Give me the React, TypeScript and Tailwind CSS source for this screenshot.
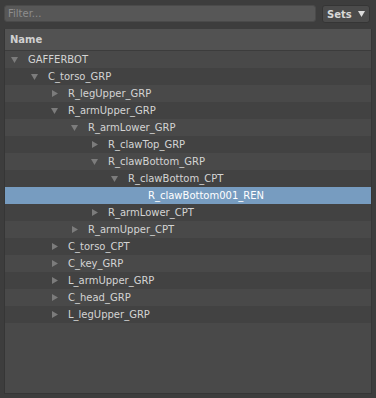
import React from "react";

type Node = { name: string; level: number; state: "open" | "closed" | "leaf" };

const rows: Node[] = [
  { name: "GAFFERBOT", level: 0, state: "open" },
  { name: "C_torso_GRP", level: 1, state: "open" },
  { name: "R_legUpper_GRP", level: 2, state: "closed" },
  { name: "R_armUpper_GRP", level: 2, state: "open" },
  { name: "R_armLower_GRP", level: 3, state: "open" },
  { name: "R_clawTop_GRP", level: 4, state: "closed" },
  { name: "R_clawBottom_GRP", level: 4, state: "open" },
  { name: "R_clawBottom_CPT", level: 5, state: "open" },
  { name: "R_clawBottom001_REN", level: 6, state: "leaf" },
  { name: "R_armLower_CPT", level: 4, state: "closed" },
  { name: "R_armUpper_CPT", level: 3, state: "closed" },
  { name: "C_torso_CPT", level: 2, state: "closed" },
  { name: "C_key_GRP", level: 2, state: "closed" },
  { name: "L_armUpper_GRP", level: 2, state: "closed" },
  { name: "C_head_GRP", level: 2, state: "closed" },
  { name: "L_legUpper_GRP", level: 2, state: "closed" },
];

const font = { fontFamily: '"DejaVu Sans", sans-serif' };

function Arrow({ state }: { state: Node["state"] }) {
  if (state === "leaf") return <span className="w-[7px] mr-[10px] shrink-0" />;
  return (
    <span className="w-[7px] mr-[10px] shrink-0 flex items-center justify-center">
      {state === "open" ? (
        <svg width="7" height="6" viewBox="0 0 7 6">
          <polygon points="0,0 7,0 3.5,6" fill="#7c7c7c" />
        </svg>
      ) : (
        <svg width="6" height="7" viewBox="0 0 6 7">
          <polygon points="0,0 6,3.5 0,7" fill="#7c7c7c" />
        </svg>
      )}
    </span>
  );
}

export default function App() {
  return (
    <div
      className="w-[376px] h-[398px] bg-[#3d3d3d] pt-[5px] pl-[4px] pr-[4px] flex flex-col text-[10px]"
      style={font}
    >
      <div className="flex h-[18px] gap-[6px]">
        <div className="flex-1 h-[17px] rounded-[3px] bg-[#575757] border border-[#4a4a4a] flex items-center pl-[3px] text-[#8e8e8e]">
          Filter...
        </div>
        <div className="w-[48px] h-[18px] mr-[2px] rounded-[3px] bg-[#4b4b4b] border border-[#353535] flex items-center pl-[4px] gap-[6px] text-[#d8d8d8] font-bold">
          <span>Sets</span>
          <svg width="7" height="6" viewBox="0 0 7 6">
            <polygon points="0,0 7,0 3.5,6" fill="#dcdcdc" />
          </svg>
        </div>
      </div>
      <div className="mt-[6px] h-[365px] border-l border-r border-b border-[#363636] bg-[#494949] flex flex-col">
        <div className="h-[22px] shrink-0 bg-[#525252] border-b border-[#3c3c3c] flex items-center pl-[5px] font-bold text-[#d0d0d0]">
          Name
        </div>
        {rows.map((r, i) => {
          const selected = r.name === "R_clawBottom001_REN";
          const bg = selected ? "bg-[#779cc0]" : i % 2 === 1 ? "bg-[#424242]" : "bg-[#494949]";
          return (
            <div key={r.name} className={`h-[17px] shrink-0 flex items-center ${bg}`}>
              <span className="shrink-0" style={{ width: 6 + r.level * 20 }} />
              <Arrow state={r.state} />
              <span className={selected ? "text-white" : "text-[#d4d4d4]"}>{r.name}</span>
            </div>
          );
        })}
      </div>
    </div>
  );
}
